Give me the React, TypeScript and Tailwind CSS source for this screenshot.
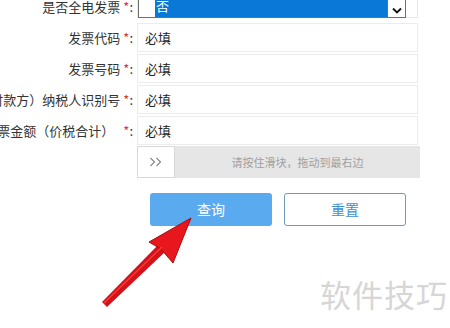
import React from "react";

const font = { fontFamily: '"Noto Sans CJK SC", "Noto Sans", sans-serif' };

function Label({ text, wide }: { text: string; wide?: boolean }) {
  return (
    <div className="flex w-[133px] shrink-0 items-center justify-end whitespace-nowrap text-[13px] text-[#333]">
      <span className="shrink-0">{text}</span>
      <span className={wide ? "ml-[9px] shrink-0 text-[#d23a3a]" : "ml-[3px] shrink-0 text-[#d23a3a]"}>*</span>
      <span className="shrink-0">:</span>
    </div>
  );
}

function InputRow({ label, wide }: { label: string; wide?: boolean }) {
  return (
    <div className="mt-[2px] flex h-[29px] items-center">
      <Label text={label} wide={wide} />
      <div className="ml-[4px] flex h-[29px] w-[281px] items-center border border-[#ececec] bg-white pl-[7px] text-[13px] text-[#222]">
        必填
      </div>
    </div>
  );
}

export default function App() {
  return (
    <div className="relative h-[328px] w-[450px] overflow-hidden bg-white" style={font}>
      {/* form */}
      <div className="mt-[-13px] flex flex-col">
        {/* select row */}
        <div className="flex h-[31px] items-center">
          <div className="mt-[8px] flex">
            <Label text="是否全电发票" />
          </div>
          <div className="ml-[4px] flex h-[31px] w-[281px] border border-[#e8e8e8] bg-white">
            <div className="flex h-[30px] w-[268px] border border-[#6f6f6f] bg-white pl-[16px]">
              <div className="flex flex-1 items-end bg-[#0a78d6] pb-[3px] pl-[1px] text-[13px] leading-[16px] text-white">
                否
              </div>
              <div className="flex w-[18px] items-end justify-center border-l border-[#6f6f6f] pb-[3px]">
                <svg width="10" height="7" viewBox="0 0 10 7">
                  <path d="M1 1.5 L5 5.5 L9 1.5" fill="none" stroke="#111" strokeWidth="1.8" />
                </svg>
              </div>
            </div>
          </div>
        </div>
        <div className="h-[3px]" />
        <InputRow label="发票代码" />
        <InputRow label="发票号码" />
        <InputRow label="购买方（付款方）纳税人识别号" />
        <InputRow label="开票金额（价税合计）" wide />

        {/* slider */}
        <div className="mt-[1px] flex">
          <div className="w-[137px] shrink-0" />
          <div className="flex h-[32px] w-[283px] bg-[#e6e6e6]">
            <div className="flex h-[32px] w-[38px] items-center justify-center border border-[#d8d8d8] bg-white">
              <svg width="14" height="10" viewBox="0 0 14 10">
                <path d="M1.5 1 L5.5 5 L1.5 9 M7.5 1 L11.5 5 L7.5 9" fill="none" stroke="#8a8a8a" strokeWidth="1.2" />
              </svg>
            </div>
            <div className="flex flex-1 items-center justify-center text-[11px] text-[#a0a0a0]">
              请按住滑块，拖动到最右边
            </div>
          </div>
        </div>

        {/* buttons */}
        <div className="mt-[15px] flex gap-[12px] pl-[150px]">
          <button className="flex h-[33px] w-[122px] items-center justify-center rounded-[3px] bg-[#5aaaf0] text-[14px] text-white">
            查询
          </button>
          <button className="flex h-[33px] w-[122px] items-center justify-center rounded-[3px] border border-[#6f9bb8] bg-white text-[14px] text-[#3f8fd2]">
            重置
          </button>
        </div>
      </div>

      {/* watermark */}
      <div className="absolute left-[320px] top-[276px] text-[31px] leading-[36px] tracking-[1px] text-[#d6d6d6]">
        软件技巧
      </div>

      {/* red arrow */}
      <svg className="absolute left-0 top-0" width="450" height="328" viewBox="0 0 450 328">
        <path d="M102 302 L107 307 L166 251 L159 244 Z" fill="#d4121a" />
        <path d="M191 218 L149 242 L161 249 L173 263 Z" fill="#e8161d" stroke="#a80c11" strokeWidth="1" strokeLinejoin="round" />
        <path d="M104 303 L162 247" stroke="#ff3b3b" strokeWidth="1.2" />
      </svg>
    </div>
  );
}
